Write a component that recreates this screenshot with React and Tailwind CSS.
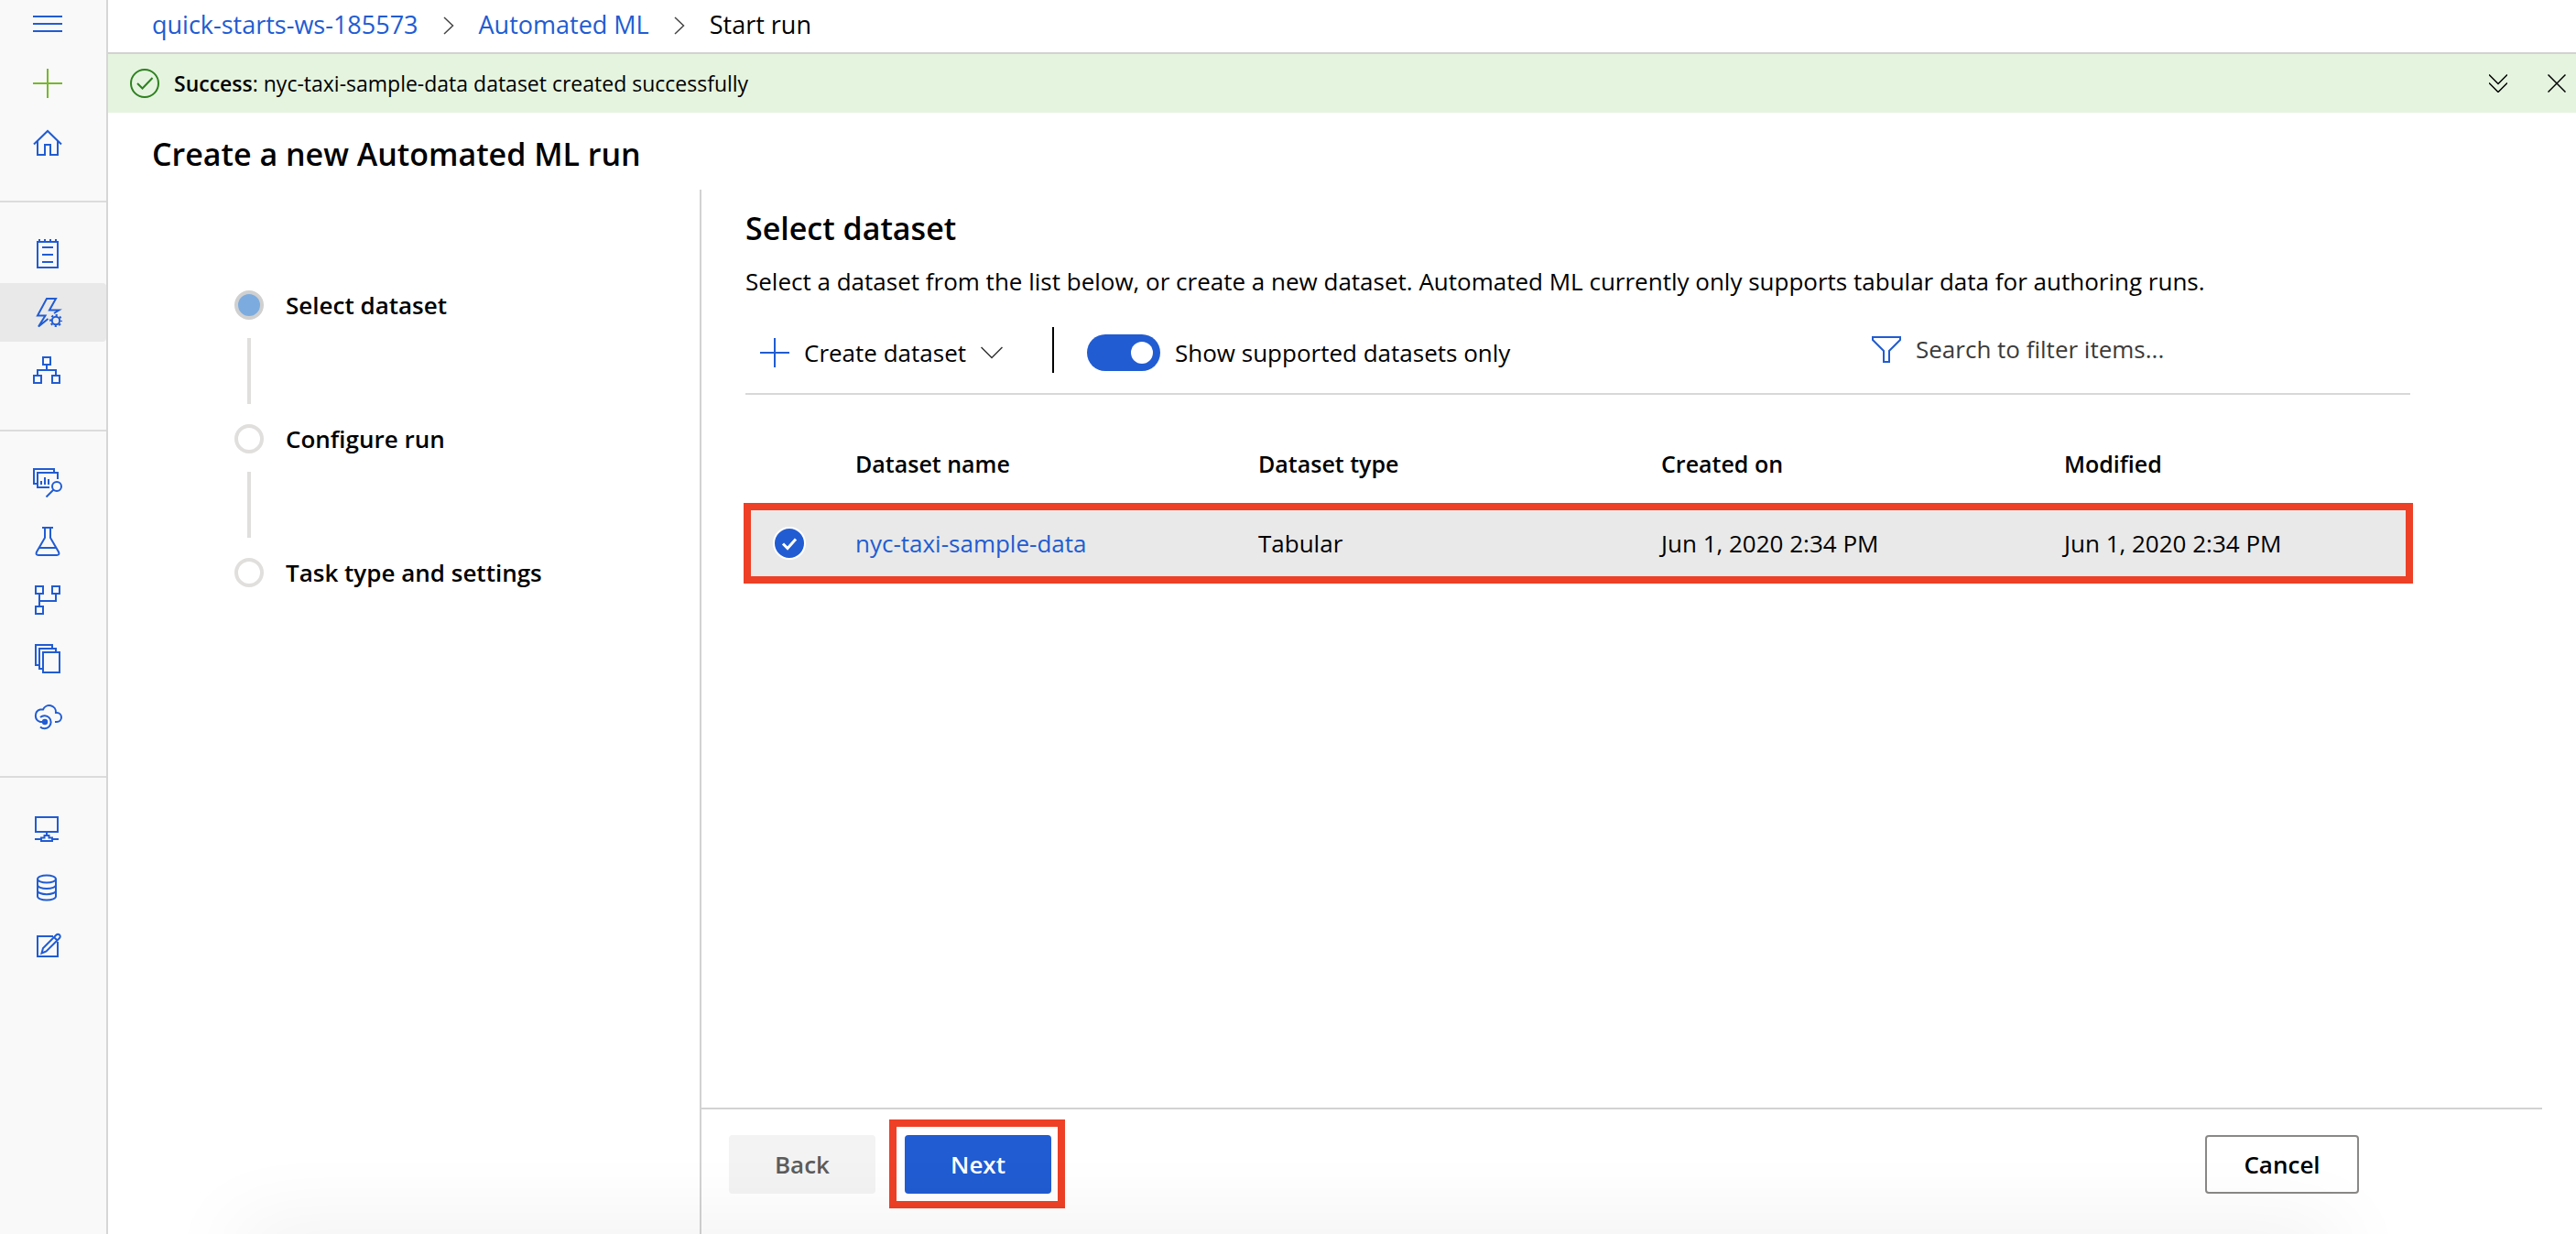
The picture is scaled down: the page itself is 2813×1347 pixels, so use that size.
import React from "react";

function Icon({ children, className = "size-8 text-[#215cd2]", size = 32, width = 2 }) {
  return (
    <svg
      className={`shrink-0 ${className}`}
      viewBox={`0 0 ${size} ${size}`}
      fill="none"
      stroke="currentColor"
      strokeWidth={width}
      aria-hidden="true"
    >
      {children}
    </svg>
  );
}

const icons = {
  menu: <path d="M0 8h32M0 16h32M0 24h32" />,
  add: <path d="M16 0v32M0 16h32" stroke="#76b82a" />,
  home: <path d="M1 18.500L16 4l15 14.500M5 15v15h8V19h6v11h8V15" />,
  notebooks: (
    <path d="M5 3h22v28H5zM7 0v3M13 0v3M19 0v3M25 0v3M10 9h12M10 17h12M10 25h12" />
  ),
  automated: (
    <>
      <path d="M16.500 23L6 31.500 13.500 19.500H5L15 1h10l-7 12.500h10.500L23 17" />
      <circle cx="25" cy="25" r="4.200" />
      <circle cx="25" cy="25" r="6" strokeWidth="2" strokeDasharray="2.2 2.512" strokeDashoffset="1.100" />
    </>
  ),
  designer: <path d="M11 1h8v8h-8zM1 21h8v8H1zM21 21h8v8h-8zM15 10v5M5 20v-5h20v5" />,
  datasets: (
    <>
      <path d="M4 17H1V1h22v3M27 12V5H5v16h13M9 14v4M13 10v8M17 12v6" />
      <circle cx="26" cy="20" r="5" />
      <path d="M22.500 23.500l-8 8" />
    </>
  ),
  experiments: (
    <path d="M10 1h12M13 1v11L4 27.500Q2.500 31 6 31h20q3.500 0 2-3.500L19 12V1M7 23h18" />
  ),
  pipelines: <path d="M3 1h8v8H3zM21 1h8v8h-8zM3 23h8v8H3zM7 10v12M7 17h18v-7" />,
  models: <path d="M6 23H3V1h18v3M10 27H7V5h18v3M11 9h18v22H11z" />,
  endpoints: (
    <>
      <path d="M10 21H8A7 7 0 0 1 8 7.500h3A7.300 7.300 0 0 1 25 11h1a5 5 0 0 1 0 10h-2" />
      <path d="M8 16a7 7 0 1 1 0 10.500" />
      <circle cx="13" cy="21" r="3.200" fill="currentColor" stroke="none" />
    </>
  ),
  compute: <path d="M3 3h24v16H3zM15 20v3M2 27h6M22 27h6M9 25.500h3.500V23h5v2.500H21V29H9z" />,
  datastores: (
    <>
      <ellipse cx="15" cy="6.500" rx="10" ry="4" />
      <path d="M5 6.500v19c0 2.200 4.500 4 10 4s10-1.800 10-4v-19M5 13c0 2.200 4.500 4 10 4s10-1.800 10-4M5 19.200c0 2.200 4.500 4 10 4s10-1.800 10-4" />
    </>
  ),
  labeling: (
    <path d="M22 5H5v22h22V11M9.500 23.500l1.500-5.500L25.500 3.500a2.400 2.400 0 0 1 3.500 3.500L14.500 21.500zM23 6l3.500 3.500" />
  ),
};

function NavItem({ icon, label, active }) {
  return (
    <li>
      <a
        href="#"
        aria-label={label}
        className={`flex h-16 items-center rounded-r pl-9 ${active ? "bg-[#e9e9e9]" : ""}`}
      >
        <Icon>{icons[icon]}</Icon>
      </a>
    </li>
  );
}

const navGroups = [
  [
    ["notebooks", "Notebooks"],
    ["automated", "Automated ML", true],
    ["designer", "Designer"],
  ],
  [
    ["datasets", "Datasets"],
    ["experiments", "Experiments"],
    ["pipelines", "Pipelines"],
    ["models", "Models"],
    ["endpoints", "Endpoints"],
  ],
  [
    ["compute", "Compute"],
    ["datastores", "Datastores"],
    ["labeling", "Data labeling"],
  ],
];

function Sidebar() {
  return (
    <nav className="w-[118px] shrink-0 border-r-2 border-[#d6d6d6] bg-[#f9f9f9]">
      <button type="button" aria-label="Toggle navigation" className="flex h-[59px] w-full items-center pb-[7px] pl-9">
        <Icon>{icons.menu}</Icon>
      </button>
      <ul className="pb-8">
        <NavItem icon="add" label="New" />
        <NavItem icon="home" label="Home" />
      </ul>
      {navGroups.map((group, i) => (
        <ul key={i} className="border-t-2 border-[#dcdcdc] pt-6 pb-8">
          {group.map(([icon, label, active]) => (
            <NavItem key={icon} icon={icon} label={label} active={active} />
          ))}
        </ul>
      ))}
    </nav>
  );
}

function Crumb() {
  return (
    <Icon size={20} width={1.5} className="size-5 text-[#444]">
      <path d="M5 1l9.500 9L5 19" />
    </Icon>
  );
}

function Breadcrumbs() {
  return (
    <div className="flex h-[59px] items-center gap-[23px] border-b-2 border-[#d2d2d2] pb-0.5 pl-12 text-[27px]">
      <a href="#" className="text-[#215cd2]">quick-starts-ws-185573</a>
      <Crumb />
      <a href="#" className="text-[#215cd2]">Automated ML</a>
      <Crumb />
      <span>Start run</span>
    </div>
  );
}

function Banner() {
  return (
    <div role="status" className="flex h-16 items-center bg-[#e5f4df] pr-[11px] pl-6">
      <Icon className="size-8 text-[#2f8020]">
        <circle cx="16" cy="16" r="15" />
        <path d="M8 16l5.500 5.500L24.500 10" />
      </Icon>
      <p className="ml-4 text-[23px]">
        <span className="font-semibold">Success</span>: nyc-taxi-sample-data dataset created successfully
      </p>
      <button type="button" aria-label="Expand messages" className="ml-auto">
        <Icon size={20} width={1.5} className="size-5 text-black">
          <path d="M0 .5l10 10 10-10M0 9.500l10 10 10-10" />
        </Icon>
      </button>
      <button type="button" aria-label="Dismiss" className="ml-11">
        <Icon size={20} width={1.5} className="size-5 text-black">
          <path d="M.5.5l19 19M19.500.5l-19 19" />
        </Icon>
      </button>
    </div>
  );
}

function Steps() {
  const steps = ["Select dataset", "Configure run", "Task type and settings"];
  return (
    <ol className="w-[646px] shrink-0 pt-[110px] pl-[138px]">
      {steps.map((step, i) => (
        <li key={step} aria-current={i === 0 ? "step" : undefined}>
          {i > 0 && <div className="my-5 ml-[14px] h-[74px] w-1 border-b-2 border-white bg-[#e1dfdd]" />}
          <div className="flex h-8 items-center gap-6">
            <span
              className={`size-8 rounded-full border-4 ${
                i === 0 ? "border-[#d0d0d0] bg-[#7cacdf]" : "border-[#e1dfdd] bg-white"
              }`}
            />
            <span className="text-[26px] font-semibold">{step}</span>
          </div>
        </li>
      ))}
    </ol>
  );
}

function Toolbar() {
  return (
    <div className="flex h-[104px] items-center border-b-2 border-[#d8d8d8] pt-[14px] pl-4 text-[26px]">
      <button type="button" className="flex items-center gap-4">
        <Icon>
          <path d="M16 0v32M0 16h32" />
        </Icon>
        Create dataset
        <Icon size={24} width={1.5} className="size-6 text-[#333]">
          <path d="M.5 6L12 17.500 23.500 6" />
        </Icon>
      </button>
      <span className="mb-1.5 ml-[54px] h-[50px] w-0.5 bg-black" />
      <label className="ml-9 flex items-center gap-4">
        <input
          type="checkbox"
          role="switch"
          defaultChecked
          className="h-10 w-20 appearance-none rounded-full bg-[#215cd2] p-2 before:ml-10 before:block before:size-6 before:rounded-full before:bg-white"
        />
        Show supported datasets only
      </label>
      <label className="mr-[180px] mb-2 ml-auto flex items-center gap-4">
        <Icon>
          <path d="M1 3h30v3L19 18v12h-6V18L1 6z" />
        </Icon>
        <input
          type="text"
          aria-label="Search to filter items"
          placeholder="Search to filter items..."
          className="w-[360px] placeholder:text-[#3b3b3b]"
        />
      </label>
    </div>
  );
}

function DatasetTable() {
  return (
    <div className="-mr-[3px] -ml-0.5 pt-9">
      <table className="w-full table-fixed border-separate border-spacing-0 text-left text-[26px]">
        <colgroup>
          <col className="w-[122px]" />
          <col className="w-[440px]" />
          <col className="w-[440px]" />
          <col className="w-[440px]" />
          <col />
        </colgroup>
        <thead>
          <tr className="h-[82px] text-[25px]">
            <td />
            <th className="pb-0.5 font-semibold">Dataset name</th>
            <th className="pb-0.5 font-semibold">Dataset type</th>
            <th className="pb-0.5 font-semibold">Created on</th>
            <th className="pb-0.5 font-semibold">Modified</th>
          </tr>
        </thead>
        <tbody>
          <tr className="h-[88px] bg-[#e9e9e9] outline-8 -outline-offset-8 outline-[#ed4026]">
            <td className="pl-8">
              <label className="grid size-9 place-items-center">
                <input
                  type="radio"
                  name="dataset"
                  defaultChecked
                  aria-label="nyc-taxi-sample-data"
                  className="col-start-1 row-start-1 size-9 appearance-none rounded-full border-2 border-white bg-[#215cd2]"
                />
                <Icon width={3} className="pointer-events-none col-start-1 row-start-1 size-8 text-white">
                  <path d="M9 16.500l5 5 9-10" />
                </Icon>
              </label>
            </td>
            <td>
              <a href="#" className="text-[#215cd2]">nyc-taxi-sample-data</a>
            </td>
            <td>Tabular</td>
            <td>Jun 1, 2020 2:34 PM</td>
            <td>Jun 1, 2020 2:34 PM</td>
          </tr>
        </tbody>
      </table>
    </div>
  );
}

function Footer() {
  return (
    <div className="mr-[37px] flex h-[138px] items-start border-t-2 border-[#d2d2d2] pr-[200px] pl-[30px] text-[26px] font-semibold">
      <button type="button" disabled className="mt-7 h-16 w-40 rounded bg-[#f3f3f3] text-[#5c5c5c]">
        Back
      </button>
      <div className="mt-[11px] ml-[15px] border-8 border-[#ed4026] pt-[9px] pr-[7px] pb-2 pl-[9px]">
        <button type="button" className="block h-16 w-40 rounded bg-[#215cd2] text-white">
          Next
        </button>
      </div>
      <button type="button" className="mt-7 ml-auto h-16 w-[168px] rounded border-2 border-[#8a8886] bg-white">
        Cancel
      </button>
    </div>
  );
}

export default function App() {
  return (
    <div className="relative flex min-h-screen overflow-hidden bg-white font-['Open_Sans',sans-serif] text-black">
      <Sidebar />
      <div className="flex min-w-0 flex-1 flex-col">
        <Breadcrumbs />
        <Banner />
        <h1 className="flex h-[84px] items-center pt-3 pb-[6px] pl-12 text-[34px]/[44px] font-semibold">
          Create a new Automated ML run
        </h1>
        <div className="flex flex-1">
          <Steps />
          <section className="flex min-w-0 flex-1 flex-col border-l-2 border-[#d2d2d2]">
            <div className="flex-1 pt-5 pr-[181px] pl-12">
              <h2 className="text-[34px]/[44px] font-semibold">Select dataset</h2>
              <p className="mt-4 text-[26px]/[40px]">
                Select a dataset from the list below, or create a new dataset. Automated ML currently only
                supports tabular data for authoring runs.
              </p>
              <Toolbar />
              <DatasetTable />
            </div>
            <Footer />
          </section>
        </div>
      </div>
      <div className="pointer-events-none absolute inset-x-[260px] -bottom-10 h-10 shadow-[0_0_90px_rgba(0,0,0,0.1)]" />
    </div>
  );
}
